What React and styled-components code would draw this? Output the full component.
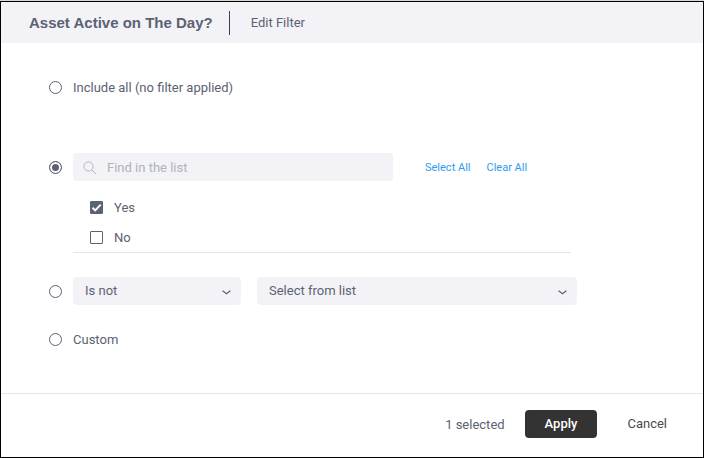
import React, { useState } from "react";
import styled, { createGlobalStyle } from "styled-components";

const GlobalStyle = createGlobalStyle`
  * {
    box-sizing: border-box;
  }
  body {
    margin: 0;
    background-color: #ffffff;
  }
  body, button, input, select {
    font-family: Roboto, "Liberation Sans", sans-serif;
    font-size: 13px;
    line-height: 16px;
    color: #5b6271;
  }
`;

const Dialog = styled.form`
  display: flex;
  flex-direction: column;
  min-height: calc(100vh - 1px);
  margin-top: 1px;
  border: 1px solid #000000;
  outline: 1px solid #d5dad3;
`;

const Header = styled.header`
  display: flex;
  align-items: center;
  height: 41px;
  padding: 0 28px;
  background-color: #f3f2f7;
`;

const Title = styled.h1`
  margin: 0;
  padding-right: 16px;
  font-family: "Liberation Sans", Arial, sans-serif;
  font-size: 15px;
  line-height: 24px;
  font-weight: bold;
  border-right: 1px solid #3a4150;
`;

const Subtitle = styled.span`
  padding-left: 21px;
`;

const Body = styled.main`
  flex: 1;
  padding: 36px 48px 43px;
`;

const Row = styled.div`
  display: grid;
  grid-template-columns: 13px minmax(0, 1fr);
  column-gap: 11px;
  align-items: center;
  margin-bottom: ${props => props.$gap || 0}px;
`;

const Radio = styled.input.attrs({ type: "radio", name: "mode" })`
  appearance: none;
  width: 13px;
  height: 13px;
  margin: 0;
  border: 1px solid #5b6271;
  border-radius: 50%;
  background-color: #ffffff;
  &:checked {
    background-color: #5b6271;
    box-shadow: inset 0 0 0 2px #ffffff;
  }
`;

const Label = styled.label`
  line-height: 17px;
`;

const Controls = styled.div`
  display: flex;
  align-items: center;
  gap: 16px;
`;

const Search = styled.div`
  display: flex;
  align-items: center;
  gap: 10px;
  flex: 0 1 320px;
  height: 28px;
  margin-right: 16px;
  padding: 1px 10px 0;
  border-radius: 4px;
  background-color: #f3f2f7;
`;

const SearchInput = styled.input`
  flex: 1;
  min-width: 0;
  padding: 0;
  border: 0;
  outline: 0;
  background: none;
  &::placeholder {
    color: #afb3ba;
    opacity: 1;
  }
`;

const TextButton = styled.button`
  padding: 2px 0 0;
  border: 0;
  background: none;
  font-size: 11px;
  color: #2e9bf0;
  white-space: nowrap;
`;

const Options = styled.ul`
  list-style: none;
  max-width: 498px;
  margin: 0 0 24px 24px;
  padding: 11px 17px 0;
  border-bottom: 1px solid #e6e6e6;
`;

const Option = styled.li`
  display: flex;
  align-items: center;
  gap: 11px;
  height: 30px;
`;

const Box = styled.span`
  display: grid;
  margin-top: 1px;
  > * {
    grid-area: 1 / 1;
  }
  svg {
    pointer-events: none;
  }
`;

const Checkbox = styled.input.attrs({ type: "checkbox" })`
  appearance: none;
  width: 13px;
  height: 13px;
  margin: 0;
  border: 1px solid #5b6271;
  border-radius: 1px;
  background-color: ${props => (props.checked ? "#5b6271" : "#ffffff")};
`;

const SelectBox = styled.div`
  display: grid;
  align-items: center;
  flex: 0 1 ${props => props.$width}px;
  min-width: 0;
  > * {
    grid-area: 1 / 1;
  }
  svg {
    justify-self: end;
    margin: 3px 10px 0 0;
    pointer-events: none;
  }
`;

const Select = styled.select`
  appearance: none;
  width: 100%;
  height: 28px;
  padding: 0 28px 0 12px;
  border: 0;
  border-radius: 4px;
  background-color: #f3f2f7;
`;

const Footer = styled.footer`
  display: flex;
  align-items: center;
  justify-content: flex-end;
  padding: 16px 20px 19px;
  border-top: 1px solid #e6e6e6;
`;

const Count = styled.span`
  margin-right: 20px;
  line-height: 16px;
  padding-top: 2px;
`;

const Button = styled.button`
  height: 28px;
  padding: 0 ${props => (props.$primary ? 20 : 16)}px;
  border: 0;
  border-radius: 4px;
  margin-left: ${props => (props.$primary ? 0 : 14)}px;
  font-weight: ${props => (props.$primary ? 500 : 400)};
  color: ${props => (props.$primary ? "#ffffff" : "#4a4a4a")};
  background-color: ${props => (props.$primary ? "#333333" : "transparent")};
`;

const SearchIcon = () => (
  <svg width="14" height="14" viewBox="0 0 14 14" fill="none" stroke="#b3b6be">
    <circle cx="5.5" cy="5.5" r="4.6" />
    <path d="M8.8 8.8 13.2 13.2" />
  </svg>
);

const TickIcon = () => (
  <svg width="13" height="13" viewBox="0 0 13 13" fill="none" stroke="#ffffff" strokeWidth="2">
    <path d="M2.5 6.7 5.2 9.4 10.7 3.6" />
  </svg>
);

const ChevronIcon = () => (
  <svg width="9" height="5" viewBox="0 0 9 5" fill="none" stroke="#5b6271" strokeWidth="1.3">
    <path d="M0.6 0.8 4.5 3.8 8.4 0.8" />
  </svg>
);

const Dropdown = ({ label, width, options }) => (
  <SelectBox $width={width}>
    <Select aria-label={label}>
      {options.map(option => (
        <option key={option}>{option}</option>
      ))}
    </Select>
    <ChevronIcon />
  </SelectBox>
);

const VALUES = ["Yes", "No"];

const App = () => {
  const [mode, setMode] = useState("list");
  const [selected, setSelected] = useState(["Yes"]);
  const [term, setTerm] = useState("");

  const radio = value => ({
    id: value,
    value,
    checked: mode === value,
    onChange: () => setMode(value)
  });

  const toggle = value =>
    setSelected(
      selected.includes(value)
        ? selected.filter(item => item !== value)
        : [...selected, value]
    );

  return (
    <>
      <GlobalStyle />
      <Dialog onSubmit={event => event.preventDefault()}>
        <Header>
          <Title>Asset Active on The Day?</Title>
          <Subtitle>Edit Filter</Subtitle>
        </Header>
        <Body>
          <Row $gap={57}>
            <Radio {...radio("all")} />
            <Label htmlFor="all">Include all (no filter applied)</Label>
          </Row>
          <Row>
            <Radio {...radio("list")} aria-label="Choose from the list" />
            <Controls>
              <Search>
                <SearchIcon />
                <SearchInput
                  aria-label="Find in the list"
                  placeholder="Find in the list"
                  value={term}
                  onChange={event => setTerm(event.target.value)}
                />
              </Search>
              <TextButton type="button" onClick={() => setSelected(VALUES)}>
                Select All
              </TextButton>
              <TextButton type="button" onClick={() => setSelected([])}>
                Clear All
              </TextButton>
            </Controls>
          </Row>
          <Options>
            {VALUES.filter(value =>
              value.toLowerCase().includes(term.toLowerCase())
            ).map(value => (
              <Option key={value}>
                <Box>
                  <Checkbox
                    id={value}
                    checked={selected.includes(value)}
                    onChange={() => toggle(value)}
                  />
                  {selected.includes(value) && <TickIcon />}
                </Box>
                <Label htmlFor={value}>{value}</Label>
              </Option>
            ))}
          </Options>
          <Row $gap={26}>
            <Radio {...radio("condition")} aria-label="Condition" />
            <Controls>
              <Dropdown label="Operator" width={168} options={["Is not", "Is"]} />
              <Dropdown
                label="Value"
                width={320}
                options={["Select from list", ...VALUES]}
              />
            </Controls>
          </Row>
          <Row>
            <Radio {...radio("custom")} />
            <Label htmlFor="custom">Custom</Label>
          </Row>
        </Body>
        <Footer>
          <Count>{selected.length} selected</Count>
          <Button type="submit" $primary>
            Apply
          </Button>
          <Button type="button">Cancel</Button>
        </Footer>
      </Dialog>
    </>
  );
};

export default App;
